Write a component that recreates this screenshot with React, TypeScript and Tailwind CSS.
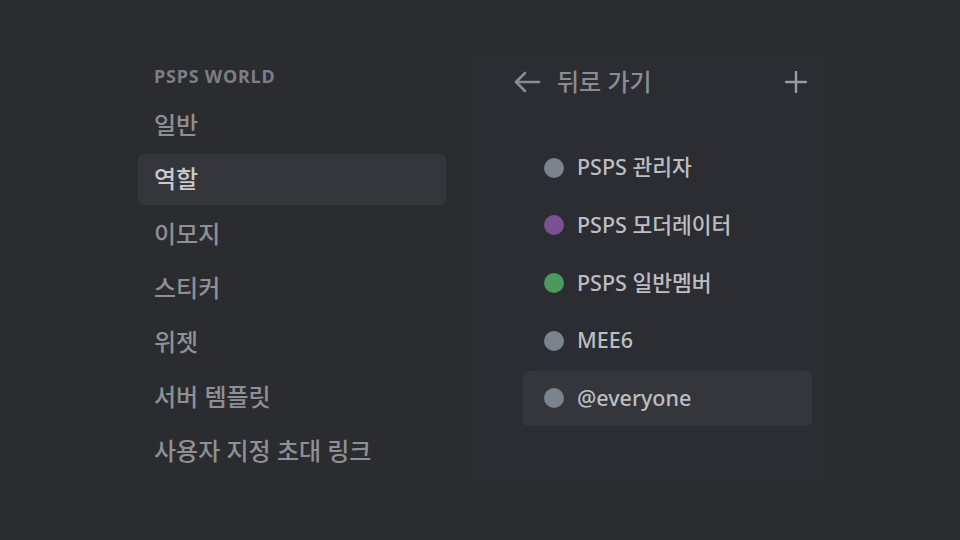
import React from "react";

const font = { fontFamily: '"Noto Sans", "Noto Sans CJK KR", sans-serif' };

const menu = ["일반", "역할", "이모지", "스티커", "위젯", "서버 템플릿", "사용자 지정 초대 링크"];

const roles = [
  { name: "PSPS 관리자", color: "bg-[#7b838d]" },
  { name: "PSPS 모더레이터", color: "bg-[#7a4f94]" },
  { name: "PSPS 일반멤버", color: "bg-[#4b9a5b]" },
  { name: "MEE6", color: "bg-[#7b838d]" },
  { name: "@everyone", color: "bg-[#7b838d]", active: true },
];

export default function App() {
  return (
    <div className="w-[960px] h-[540px] bg-[#2b2c30] flex pl-[138px] pt-[56px] gap-[22px]" style={font}>
      {/* settings sidebar */}
      <div className="w-[308px] flex flex-col gap-[3.4px]">
        <div className="h-[40px] flex items-center px-4 text-[18px] font-bold text-[#7c7e84] tracking-[0.8px]">
          PSPS WORLD
        </div>
        {menu.map((m) => (
          <div
            key={m}
            className={
              m === "역할"
                ? "h-[51px] flex items-center px-4 rounded-md bg-[#35363b] text-[24px] font-medium text-[#c6c8cc]"
                : "h-[51px] flex items-center px-4 rounded-md text-[24px] font-medium text-[#8e9095]"
            }
          >
            {m}
          </div>
        ))}
      </div>

      {/* roles panel */}
      <div className="w-[356px] h-[428px] bg-[#2b2d33] flex flex-col">
        <div className="h-[52px] flex items-center pl-[45px] pr-[17px]">
          <svg width="28" height="24" viewBox="0 0 28 24" fill="none" stroke="#8a8c91" strokeWidth="2.6" strokeLinecap="round" strokeLinejoin="round">
            <path d="M26 12H3" />
            <path d="M12 3l-9 9 9 9" />
          </svg>
          <span className="ml-[16px] text-[24px] font-medium text-[#8a8c91]">뒤로 가기</span>
          <svg className="ml-auto" width="22" height="22" viewBox="0 0 22 22" fill="none" stroke="#9a9ca1" strokeWidth="2.4" strokeLinecap="round">
            <path d="M11 1v20" />
            <path d="M1 11h20" />
          </svg>
        </div>
        <div className="flex flex-col gap-[2.7px] pl-[55px] pr-[12px] mt-[32px]">
          {roles.map((r) => (
            <div
              key={r.name}
              className={
                r.active
                  ? "h-[55px] flex items-center pl-[21px] rounded-md bg-[#35363b]"
                  : "h-[55px] flex items-center pl-[21px] rounded-md"
              }
            >
              <div className={`w-[20px] h-[20px] rounded-full ${r.color}`} />
              <span className="ml-[13px] text-[21.5px] font-medium text-[#bcbec2]">{r.name}</span>
            </div>
          ))}
        </div>
      </div>
    </div>
  );
}
